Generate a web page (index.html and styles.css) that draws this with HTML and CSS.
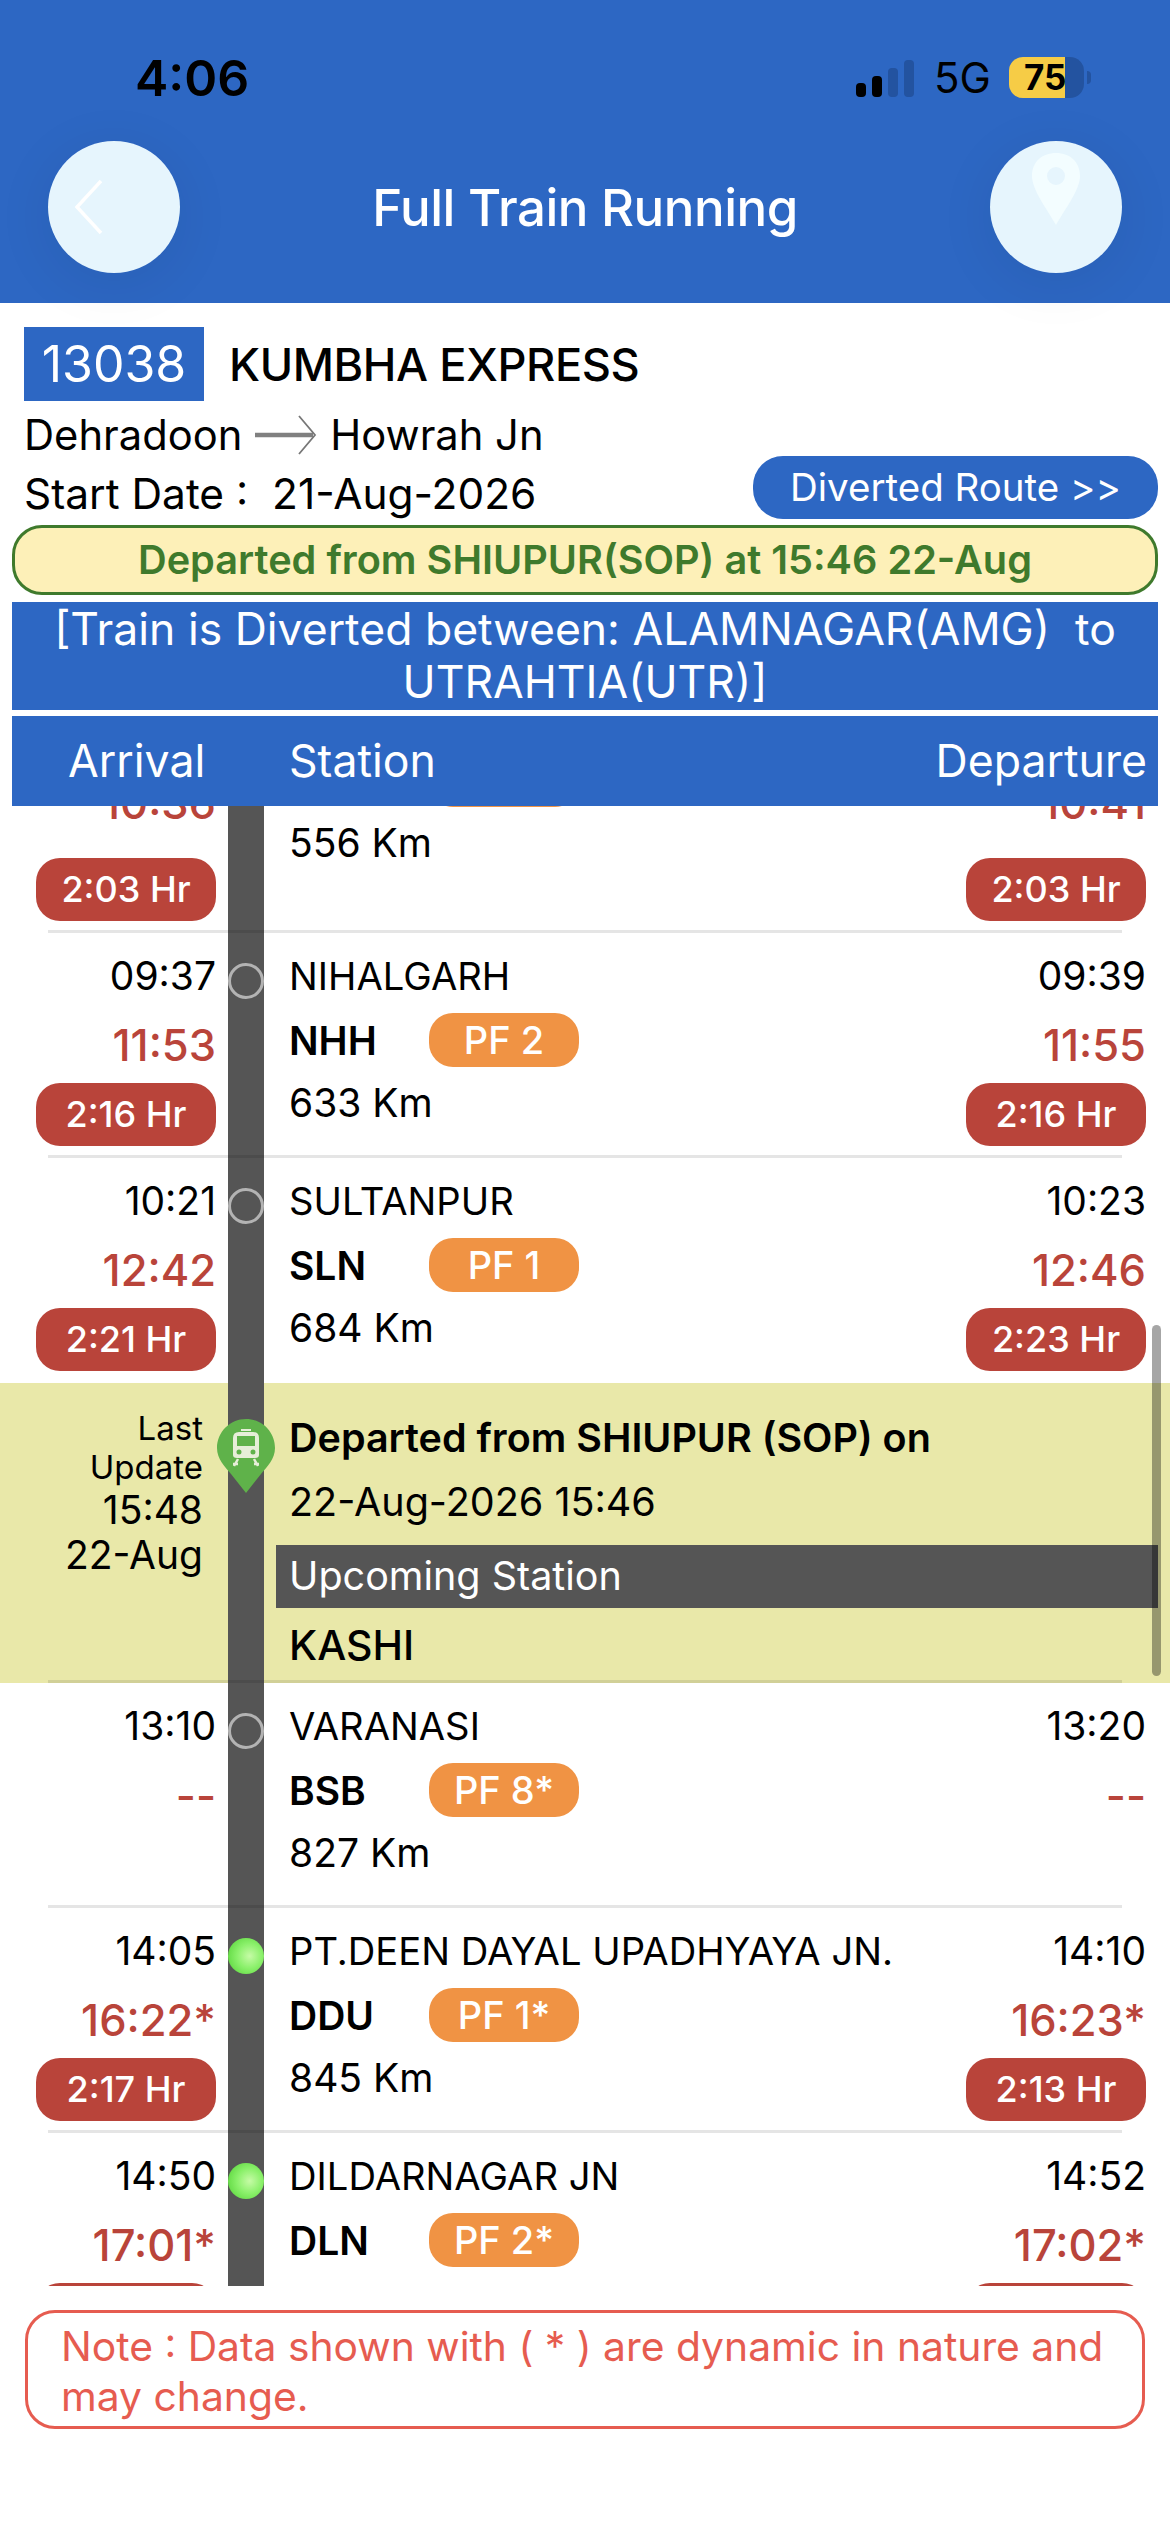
FILE: index.html
```html
<!DOCTYPE html>
<html lang="en">
<head>
    <meta charset="UTF-8">
    <meta name="viewport" content="width=device-width, initial-scale=1.0">
    <title>Full Train Running</title>
    <link rel="stylesheet" href="styles.css">
</head>
<body>
    <header class="top">
        <div class="status-bar">
            <span class="clock">4:06</span>
            <div class="status-right">
                <svg class="signal" width="58" height="37" viewBox="0 0 58 37">
                    <rect x="0" y="23" width="10" height="14" rx="4" fill="#000"/>
                    <rect x="16" y="16" width="10" height="21" rx="4" fill="#000"/>
                    <rect x="32" y="8" width="10" height="29" rx="4" fill="#2353a0"/>
                    <rect x="48" y="0" width="10" height="37" rx="4" fill="#2353a0"/>
                </svg>
                <span class="net">5G</span>
                <div class="battery"><span>75</span></div>
                <div class="battery-tip"></div>
            </div>
        </div>
        <div class="nav">
            <button class="round-btn">
                <svg class="back-icon" width="32" height="56" viewBox="0 0 32 56"><path d="M28 2 L4 28 L28 54" fill="none" stroke="#fff" stroke-width="3.5"/></svg>
            </button>
            <h1>Full Train Running</h1>
            <button class="round-btn">
                <svg class="pin-icon" width="48" height="72" viewBox="0 0 48 72"><path fill-rule="evenodd" d="M24 0 C38 0 48 9 48 23 C48 37 33 56 24 72 C15 56 0 37 0 23 C0 9 10 0 24 0 Z M24 14 A9 9 0 1 0 24 32 A9 9 0 1 0 24 14 Z" fill="#f3fdff"/></svg>
            </button>
        </div>
    </header>

    <section class="train-info">
        <div class="train-title">
            <span class="train-no">13038</span>
            <span class="train-name">KUMBHA EXPRESS</span>
        </div>
        <div class="route">
            <span>Dehradoon</span>
            <svg width="62" height="40" viewBox="0 0 62 40">
                <path d="M0 20 H58" stroke="#808080" stroke-width="4.5"/>
                <path d="M44 1 L60 20 L44 39" fill="none" stroke="#777" stroke-width="1.8"/>
            </svg>
            <span>Howrah Jn</span>
        </div>
        <div class="date-row">
            <span class="start-date">Start Date :&nbsp; 21-Aug-2026</span>
            <a class="route-btn">Diverted Route &gt;&gt;</a>
        </div>
    </section>

    <div class="running-status">Departed from SHIUPUR(SOP) at 15:46 22-Aug</div>
    <div class="diverted">[Train is Diverted between: ALAMNAGAR(AMG) &nbsp;to UTRAHTIA(UTR)]</div>
    <div class="table-head">
        <span class="head-arrival">Arrival</span>
        <span class="head-station">Station</span>
        <span class="head-departure">Departure</span>
    </div>

    <div class="list">
        <div class="rail"></div>

        <div class="row row-first">
            <div class="col-time">
                <div class="actual">10:36</div>
                <div class="delay">2:03 Hr</div>
            </div>
            <div class="col-station">
                <div class="pf-line"><span class="code"></span><span class="pf"></span></div>
                <div class="km">556 Km</div>
            </div>
            <div class="col-time">
                <div class="actual">10:41</div>
                <div class="delay">2:03 Hr</div>
            </div>
        </div>

        <div class="row">
            <span class="dot"></span>
            <div class="col-time">
                <div class="sched">09:37</div>
                <div class="actual">11:53</div>
                <div class="delay">2:16 Hr</div>
            </div>
            <div class="col-station">
                <div class="name">NIHALGARH</div>
                <div class="pf-line"><span class="code">NHH</span><span class="pf">PF 2</span></div>
                <div class="km">633 Km</div>
            </div>
            <div class="col-time">
                <div class="sched">09:39</div>
                <div class="actual">11:55</div>
                <div class="delay">2:16 Hr</div>
            </div>
        </div>

        <div class="row no-line">
            <span class="dot"></span>
            <div class="col-time">
                <div class="sched">10:21</div>
                <div class="actual">12:42</div>
                <div class="delay">2:21 Hr</div>
            </div>
            <div class="col-station">
                <div class="name">SULTANPUR</div>
                <div class="pf-line"><span class="code">SLN</span><span class="pf">PF 1</span></div>
                <div class="km">684 Km</div>
            </div>
            <div class="col-time">
                <div class="sched">10:23</div>
                <div class="actual">12:46</div>
                <div class="delay">2:23 Hr</div>
            </div>
        </div>

        <div class="row row-current">
            <svg class="marker" width="58" height="74" viewBox="0 0 58 74">
                <path d="M29 0 C45 0 58 13 58 29 C58 40 50 48 44 55 L29 74 L14 55 C8 48 0 40 0 29 C0 13 13 0 29 0 Z" fill="#5fb24a"/>
                <path d="M24 11 H34" stroke="#e6eed8" stroke-width="2"/>
                <path fill-rule="evenodd" d="M22 13 H36 Q42 13 42 19 V36 Q42 39 38 39 H20 Q16 39 16 36 V19 Q16 13 22 13 Z M20 17 V27 H38 V17 Z M22 30.5 A2.5 2.5 0 1 0 22 35.5 A2.5 2.5 0 1 0 22 30.5 Z M36 30.5 A2.5 2.5 0 1 0 36 35.5 A2.5 2.5 0 1 0 36 30.5 Z" fill="#e6eed8"/>
                <path d="M21 40 L17 47 M37 40 L41 47 M16 45 H21 M37 45 H42" stroke="#e6eed8" stroke-width="2.5"/>
            </svg>
            <div class="update-col">
                <div class="update-label">Last</div>
                <div class="update-label">Update</div>
                <div class="update-val">15:48</div>
                <div class="update-val">22-Aug</div>
            </div>
            <div class="current-col">
                <div class="departed">Departed from SHIUPUR (SOP) on</div>
                <div class="departed-date">22-Aug-2026 15:46</div>
                <div class="upcoming">Upcoming Station</div>
                <div class="next-stn">KASHI</div>
            </div>
        </div>

        <div class="row">
            <span class="dot"></span>
            <div class="col-time">
                <div class="sched">13:10</div>
                <div class="actual">--</div>
            </div>
            <div class="col-station">
                <div class="name">VARANASI</div>
                <div class="pf-line"><span class="code">BSB</span><span class="pf">PF 8*</span></div>
                <div class="km">827 Km</div>
            </div>
            <div class="col-time">
                <div class="sched">13:20</div>
                <div class="actual">--</div>
            </div>
        </div>

        <div class="row">
            <span class="dot dot-live"></span>
            <div class="col-time">
                <div class="sched">14:05</div>
                <div class="actual">16:22*</div>
                <div class="delay">2:17 Hr</div>
            </div>
            <div class="col-station">
                <div class="name">PT.DEEN DAYAL UPADHYAYA JN.</div>
                <div class="pf-line"><span class="code">DDU</span><span class="pf">PF 1*</span></div>
                <div class="km">845 Km</div>
            </div>
            <div class="col-time">
                <div class="sched">14:10</div>
                <div class="actual">16:23*</div>
                <div class="delay">2:13 Hr</div>
            </div>
        </div>

        <div class="row row-last">
            <span class="dot dot-live"></span>
            <div class="col-time">
                <div class="sched">14:50</div>
                <div class="actual">17:01*</div>
                <div class="delay delay-cut"></div>
            </div>
            <div class="col-station">
                <div class="name">DILDARNAGAR JN</div>
                <div class="pf-line"><span class="code">DLN</span><span class="pf">PF 2*</span></div>
            </div>
            <div class="col-time">
                <div class="sched">14:52</div>
                <div class="actual">17:02*</div>
                <div class="delay delay-cut"></div>
            </div>
        </div>

        <div class="scrollbar"></div>
    </div>

    <div class="note">Note : Data shown with ( * ) are dynamic in nature and may change.</div>
</body>
</html>
```

FILE: styles.css
```css
/* Basic */
* {
    box-sizing: border-box;
}

body, html {
    margin: 0;
    padding: 0;
    background: #fff;
    font-family: 'Inter', 'Roboto', sans-serif;
    color: #000;
}

body {
    width: 1170px;
    height: 2532px;
    overflow: hidden;
}

/* Header */
.top {
    height: 303px;
    background-color: #2d67c3;
    padding-top: 57px;
}

.status-bar {
    display: flex;
    justify-content: space-between;
    align-items: center;
    height: 41px;
    padding: 0 79px 0 135px;
}

.clock {
    font-size: 50px;
    font-weight: 600;
}

.status-right {
    display: flex;
    align-items: center;
}

.signal {
    margin-right: 20px;
    margin-top: 2px;
}

.net {
    font-size: 42px;
    font-weight: 400;
    width: 75px;
}

.battery {
    width: 75px;
    height: 41px;
    border-radius: 14px;
    background: linear-gradient(90deg, #f6cc46 56px, #2353a0 56px);
    font-size: 35px;
    font-weight: 700;
    line-height: 41px;
    padding-left: 15px;
}

.battery-tip {
    width: 4px;
    height: 13px;
    margin-left: 3px;
    border-radius: 0 4px 4px 0;
    background: #2353a0;
}

.nav {
    display: flex;
    justify-content: space-between;
    align-items: center;
    margin-top: 43px;
    padding: 0 48px;
}

.round-btn {
    position: relative;
    display: flex;
    align-items: center;
    justify-content: center;
    width: 132px;
    height: 132px;
    border: none;
    padding: 0;
    border-radius: 50%;
    background-color: #e6f5fd;
    box-shadow: 0 10px 60px rgba(0, 0, 0, 0.07);
}

.back-icon {
    margin-right: 50px;
}

.pin-icon {
    margin-bottom: 36px;
}

.nav h1 {
    margin: 0;
    color: #fff;
    font-size: 51px;
    font-weight: 500;
    letter-spacing: -0.5px;
}

/* Train info */
.train-info {
    padding: 24px 12px 0 24px;
}

.train-title {
    display: flex;
    align-items: center;
}

.train-no {
    width: 180px;
    height: 74px;
    background-color: #2d67c3;
    color: #fff;
    font-size: 50px;
    line-height: 74px;
    text-align: center;
}

.train-name {
    margin-left: 25px;
    font-size: 45.2px;
    font-weight: 500;
    letter-spacing: -0.4px;
}

.route {
    display: flex;
    align-items: center;
    gap: 13px;
    height: 54px;
    margin-top: 7px;
    font-size: 41.7px;
}

.date-row {
    display: flex;
    justify-content: space-between;
    align-items: center;
    height: 63px;
    margin-top: -6px;
}

.start-date {
    font-size: 42.4px;
    margin-top: 12px;
}

.route-btn {
    width: 405px;
    height: 63px;
    border-radius: 30px;
    background-color: #2d67c3;
    color: #fff;
    font-size: 38.5px;
    line-height: 63px;
    text-align: center;
}

.running-status {
    height: 70px;
    margin: 6px 12px 0;
    border: 3px solid #3f7a2c;
    border-radius: 30px;
    background-color: #fdf0b8;
    color: #3f7a2c;
    font-size: 39.7px;
    font-weight: 600;
    line-height: 65px;
    text-align: center;
}

.diverted {
    height: 108px;
    margin: 7px 12px 0;
    padding: 1px 20px 0;
    background-color: #2d67c3;
    color: #fff;
    font-size: 44.5px;
    line-height: 53px;
    text-align: center;
}

.table-head {
    display: flex;
    align-items: center;
    height: 90px;
    margin: 6px 12px 0;
    background-color: #2d67c3;
    color: #fff;
    font-size: 44.6px;
}

.head-arrival {
    margin-left: 56px;
    width: 221px;
}

.head-departure {
    margin-left: auto;
    margin-right: 11px;
}

/* Station list */
.list {
    position: relative;
    height: 1480px;
    overflow: hidden;
}

.rail {
    position: absolute;
    top: 0;
    bottom: 0;
    left: 228px;
    width: 36px;
    background-color: #555;
    z-index: 1;
}

.row {
    position: relative;
    display: flex;
    height: 225px;
    padding: 0 24px 0 36px;
}

.row::after {
    content: "";
    position: absolute;
    left: 48px;
    right: 48px;
    bottom: 0;
    height: 3px;
    background-color: rgba(0, 0, 0, 0.1);
    z-index: 2;
}

.no-line::after {
    display: none;
}

.col-time {
    width: 180px;
    padding-top: 18px;
    text-align: right;
}

.col-station {
    flex: 1;
    margin-left: 73px;
    padding-top: 18px;
}

.sched, .name, .km {
    height: 50px;
    font-size: 38.2px;
    line-height: 50px;
}

.sched {
    font-size: 39px;
}

.km {
    margin-top: 11px;
    font-size: 39px;
}

.actual {
    height: 50px;
    margin-top: 19px;
    color: #b9443a;
    font-size: 43.5px;
    font-weight: 500;
    line-height: 50px;
}

.delay {
    height: 63px;
    margin-top: 13px;
    border-radius: 24px;
    background-color: #b9443a;
    color: #fff;
    font-size: 36px;
    font-weight: 500;
    line-height: 63px;
    text-align: center;
}

.pf-line {
    display: flex;
    align-items: center;
    height: 54px;
    margin-top: 12px;
}

.code {
    width: 140px;
    font-size: 39px;
    font-weight: 600;
}

.pf {
    width: 150px;
    height: 54px;
    border-radius: 24px;
    background-color: #f09344;
    color: #fff;
    font-size: 38px;
    font-weight: 500;
    line-height: 54px;
    text-align: center;
}

.dot {
    position: absolute;
    left: 228px;
    top: 30px;
    width: 36px;
    height: 36px;
    border: 3px solid #b3b3b3;
    border-radius: 50%;
    z-index: 2;
}

.dot-live {
    border: none;
    background: radial-gradient(circle at 60% 50%, #c6fba6 0%, #8af06a 45%, #4fcf32 100%);
}

/* First row is scrolled under the table head */
.row-first {
    height: 127px;
}

.row-first .col-time, .row-first .col-station {
    display: flex;
    flex-direction: column;
    justify-content: flex-end;
    padding-top: 0;
}

.row-first .col-time {
    padding-bottom: 12px;
}

.row-first .col-station {
    padding-bottom: 65px;
}

.row-first .actual {
    flex-shrink: 0;
    margin-bottom: 17px;
}

.row-first .pf-line {
    flex-shrink: 0;
}

.row-first .delay {
    flex-shrink: 0;
}

.row-last {
    height: 153px;
    overflow: hidden;
}

.row-last::after {
    display: none;
}

/* Last update */
.row-current {
    height: 300px;
    padding: 0 12px 0 0;
    background-color: #e9e8a9;
}

.marker {
    position: absolute;
    left: 217px;
    top: 36px;
    z-index: 2;
}

.update-col {
    width: 203px;
    padding-top: 26px;
    text-align: right;
}

.update-label {
    height: 39px;
    font-size: 33px;
    line-height: 39px;
}

.update-val {
    height: 45px;
    font-size: 39px;
    line-height: 45px;
}

.current-col {
    flex: 1;
    margin-left: 86px;
    padding-top: 23px;
}

.departed, .departed-date {
    height: 64px;
    font-size: 39.5px;
    line-height: 64px;
}

.departed {
    font-weight: 600;
}

.upcoming {
    height: 63px;
    margin-top: 11px;
    margin-left: -13px;
    padding-left: 13px;
    background-color: #555;
    color: #fff;
    font-size: 39.5px;
    line-height: 63px;
}

.next-stn {
    height: 50px;
    margin-top: 12px;
    font-size: 41px;
    font-weight: 500;
    line-height: 50px;
}

.scrollbar {
    position: absolute;
    left: 1152px;
    top: 519px;
    width: 9px;
    height: 351px;
    border-radius: 5px;
    background-color: rgba(0, 0, 0, 0.35);
    z-index: 3;
}

/* Note */
.note {
    height: 119px;
    margin: 24px 25px 0;
    padding: 8px 30px 0 33px;
    border: 3px solid #e65c50;
    border-radius: 30px;
    color: #e65c50;
    font-size: 40.8px;
    line-height: 50px;
}
```
